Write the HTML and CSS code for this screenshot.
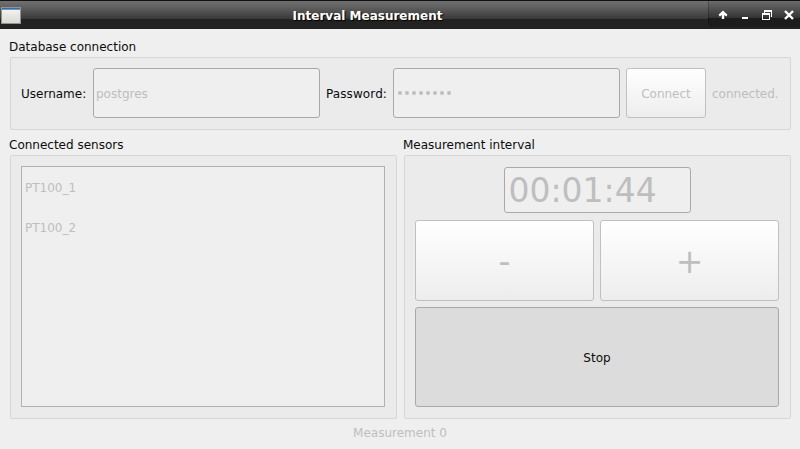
FILE: index.html
```html
<!DOCTYPE html>
<html lang="en">
<head>
<meta charset="utf-8">
<title>Interval Measurement</title>
<link rel="stylesheet" href="styles.css">
</head>
<body>
<header class="titlebar">
  <svg class="app-icon" width="20" height="17" viewBox="0 0 20 17" shape-rendering="crispEdges">
    <defs><linearGradient id="win" x1="0" y1="0" x2="0" y2="1"><stop offset="0" stop-color="#f5f5f2"/><stop offset="1" stop-color="#d9dad2"/></linearGradient></defs>
    <rect width="20" height="17" fill="#92958f"/>
    <rect x="1" y="1" width="18" height="15" fill="url(#win)"/>
    <rect x="1" y="1" width="18" height="2" fill="#4069a8"/>
    <rect x="1" y="2" width="18" height="1" fill="#7195c8"/>
  </svg>
  <h1 class="title">Interval Measurement</h1>
  <div class="controls">
    <svg width="91" height="26" viewBox="709 1 91 26" fill="#fff">
      <path d="M723 10.5 l4.5 4.3 -1.4 1.6 -1.9 -1.4 V19 h-2.4 v-4 l-1.9 1.4 -1.4 -1.6z"/>
      <path d="M742 17h6v2h-6z"/>
      <path fill-rule="evenodd" d="M762 13h8v7h-8zM763 15v4h6v-4zM764 10h8v7h-1v-5h-6v1h-1z"/>
      <path d="M785 11l8 8M793 11l-8 8" stroke="#fff" stroke-width="2.4"/>
    </svg>
  </div>
</header>
<main class="content">
  <section class="database">
    <h2 class="caption">Database connection</h2>
    <div class="group connection">
      <span class="label user-label">Username:</span>
      <div class="field">postgres</div>
      <span class="label pass-label">Password:</span>
      <div class="field password"><i></i><i></i><i></i><i></i><i></i><i></i><i></i><i></i></div>
      <button class="button connect" disabled>Connect</button>
      <span class="label state">connected.</span>
    </div>
  </section>
  <div class="columns">
    <section class="column">
      <h2 class="caption">Connected sensors</h2>
      <div class="group sensors">
        <ul class="list"><li>PT100_1</li><li>PT100_2</li></ul>
      </div>
    </section>
    <section class="column">
      <h2 class="caption">Measurement interval</h2>
      <div class="group interval">
        <div class="time">00:01:44</div>
        <div class="steps">
          <button class="button step" disabled>-</button>
          <button class="button step" disabled>+</button>
        </div>
        <button class="button stop">Stop</button>
      </div>
    </section>
  </div>
  <footer class="status">Measurement 0</footer>
</main>
</body>
</html>
```

FILE: styles.css
```css
* { box-sizing: border-box; }
body {
  margin: 0;
  width: 800px;
  height: 449px;
  overflow: hidden;
  background: #efefef;
  color: #0c0c0c;
  font: 12px/16px "DejaVu Sans", sans-serif;
}
.titlebar {
  display: grid;
  grid-template-columns: 27px 1fr 92px;
  height: 29px;
  border-top: 1px solid #111;
  background: linear-gradient(#707070 0, #646464 5px, #383838 18px, #222 18px, #222 100%);
}
.app-icon { display: block; margin: 6px 0 0 1px; }
.title {
  margin: 7px 0 0;
  text-align: center;
  font-size: 12px;
  line-height: 16px;
  color: #fff;
  text-shadow: 1px 1px 1px #000;
}
.controls {
  height: 26px;
  border-left: 1px solid rgba(0, 0, 0, 0.25);
  border-bottom-left-radius: 5px;
  background: linear-gradient(#6c6c6c, #333 17px, #1c1c1c 17px);
}
.controls svg { display: block; }
.content { padding: 10px 9px 0; }
.caption { margin: 0; height: 16px; font-size: 12px; font-weight: 400; line-height: 16px; }
.group {
  margin-left: 1px;
  border: 1px solid #d6d6d6;
  border-radius: 2px;
  background: #ebebeb;
}
.connection {
  display: flex;
  align-items: center;
  height: 73px;
  margin-top: 2px;
  padding: 10px 10px 11px;
}
.label { padding-top: 2px; }
.user-label { width: 72px; }
.pass-label { width: 73px; padding-left: 6px; letter-spacing: 0.1px; }
.field {
  display: flex;
  align-items: center;
  width: 227px;
  height: 50px;
  padding: 2px 0 0 2px;
  border: 1px solid #a9a9a9;
  border-radius: 3px;
  background: #efefef;
  color: #bebebe;
}
.password { gap: 3px; padding: 0 0 0 4px; }
.password i { width: 4px; height: 4px; border-radius: 50%; background: #bebebe; }
.button {
  padding: 2px 0 0;
  border: 1px solid #c0c0c0;
  border-radius: 3px;
  background: linear-gradient(#fff, #ededed);
  color: #bebebe;
  font: inherit;
}
.connect { width: 80px; height: 50px; margin: 0 6px; }
.state { color: #bebebe; }
.columns { display: grid; grid-template-columns: 388px 388px; gap: 6px; margin-top: 7px; }
.columns .group { height: 264px; margin-top: 2px; padding: 10px 11px 11px 10px; }
.list {
  height: 241px;
  margin: 0;
  padding: 1px 3px;
  border: 1px solid #b1b1b1;
  background: #efefef;
  color: #bebebe;
  list-style: none;
}
.list li { height: 40px; line-height: 40px; }
.interval { display: flex; flex-direction: column; }
.time {
  align-self: center;
  width: 187px;
  height: 46px;
  margin-top: 1px;
  padding: 1px 0 0 4px;
  border: 1px solid #a9a9a9;
  border-radius: 3px;
  background: #efefef;
  color: #bebebe;
  font-size: 33px;
  line-height: 44px;
}
.steps { display: grid; grid-template-columns: 1fr 1fr; gap: 6px; margin: 7px 0 6px; }
.step { height: 81px; font-size: 33px; }
.stop { height: 100px; border-color: #a9a9a9; background: #dcdcdc; color: #0c0c0c; }
.status { margin-top: 6px; text-align: center; color: #bebebe; }
```
